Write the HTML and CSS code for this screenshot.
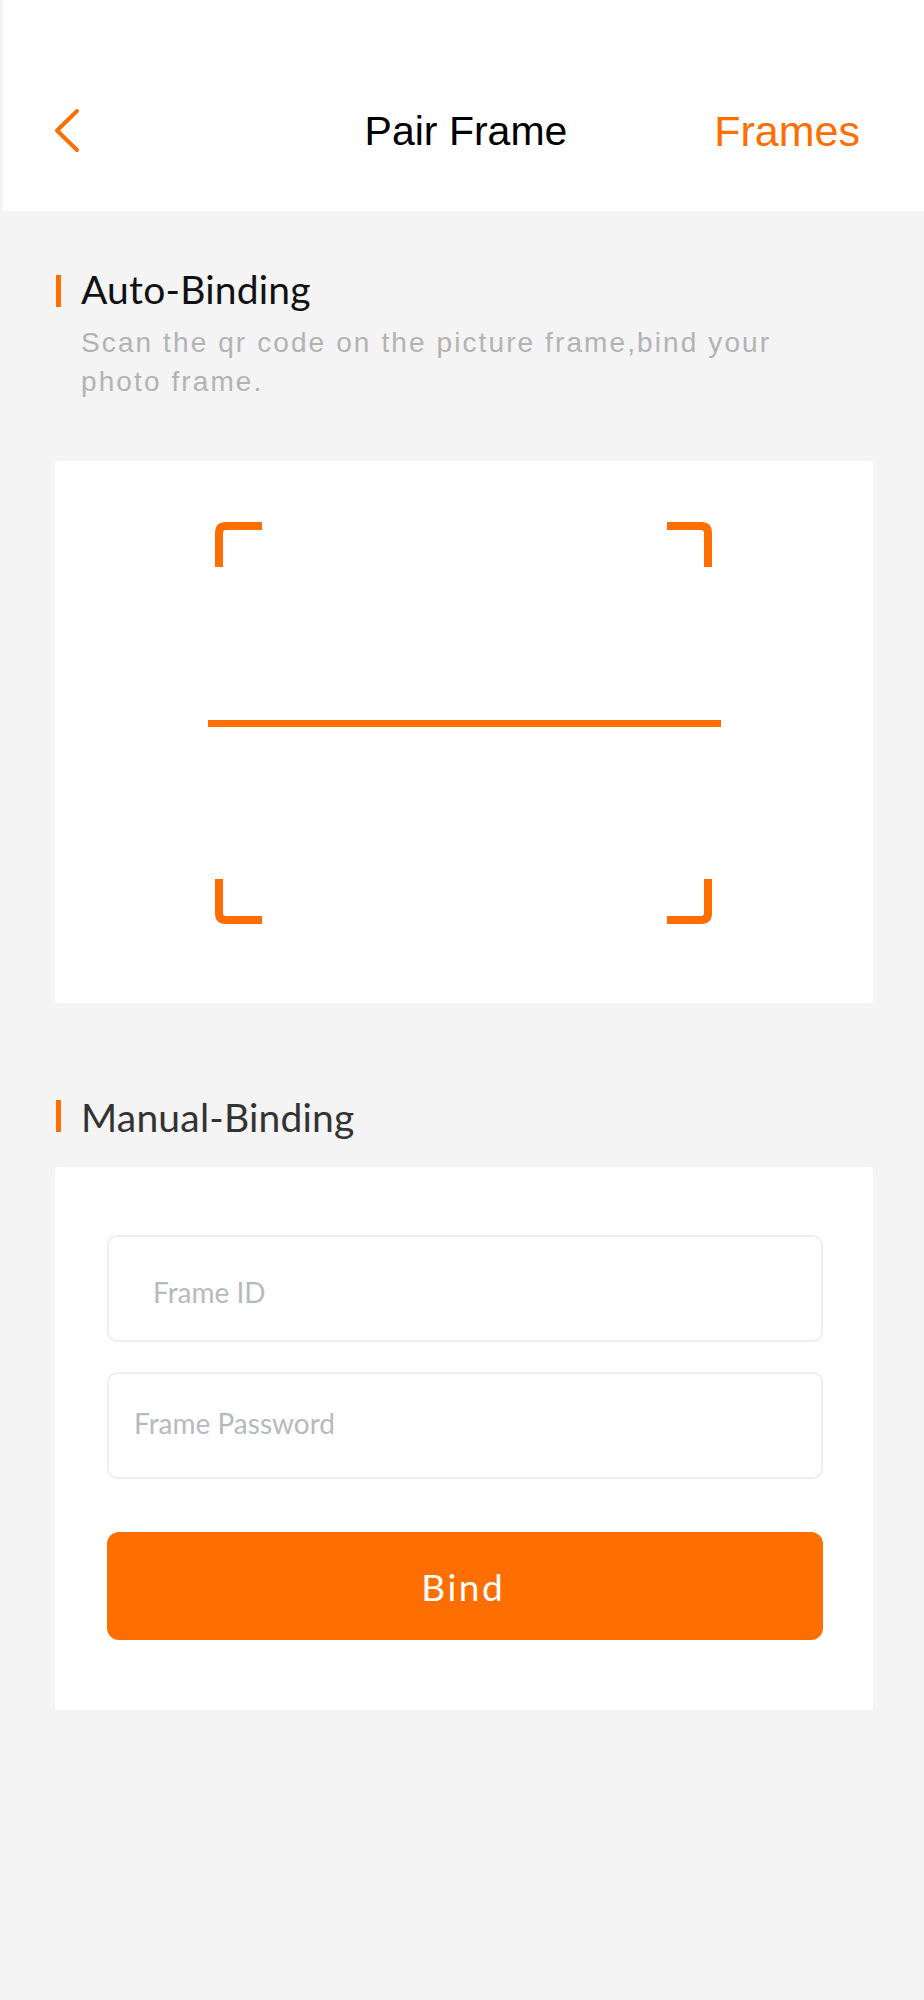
FILE: index.html
```html
<!DOCTYPE html>
<html lang="en">
<head>
<meta charset="utf-8">
<title>Pair Frame</title>
<link rel="stylesheet" href="styles.css">
</head>
<body>
<div class="page">
  <header class="nav">
    <button class="nav-back" type="button" aria-label="Back">
      <svg width="30" height="48" viewBox="0 0 30 48"><path d="M23 4 L3 23.5 L23 43" fill="none" stroke="#ff6e00" stroke-width="4" stroke-linecap="round" stroke-linejoin="round"/></svg>
    </button>
    <h1 class="nav-title">Pair Frame</h1>
    <a class="nav-action" href="#">Frames</a>
  </header>

  <main class="content">
    <section class="section section--auto">
      <h2 class="section-title"><span class="section-bar"></span><span class="section-text section-text--auto">Auto-Binding</span></h2>
      <p class="section-desc">Scan the qr code on the picture frame,bind your<br>photo frame.</p>
      <div class="card scan-card">
        <svg class="scan-frame" width="513" height="402" viewBox="0 0 513 402">
          <g fill="none" stroke="#ff6e00" stroke-width="8">
            <path d="M11 45 V11 Q11 4 18 4 H54"/>
            <path d="M459 4 H493 Q500 4 500 11 V45"/>
            <path d="M11 357 V391 Q11 398 18 398 H54"/>
            <path d="M459 398 H493 Q500 398 500 391 V357"/>
          </g>
          <rect x="0" y="198" width="513" height="7" fill="#ff6e00"/>
        </svg>
      </div>
    </section>

    <section class="section section--manual">
      <h2 class="section-title"><span class="section-bar"></span><span class="section-text section-text--manual">Manual-Binding</span></h2>
      <form class="card bind-card">
        <input class="field field--id" type="text" placeholder="Frame ID">
        <input class="field field--pwd" type="password" placeholder="Frame Password">
        <button class="bind-btn" type="button">Bind</button>
      </form>
    </section>
  </main>
</div>
</body>
</html>
```

FILE: styles.css
```css
* {
  box-sizing: border-box;
}

html, body {
  margin: 0;
  padding: 0;
  background: #f4f4f4;
}

body {
  font-family: "Liberation Sans", Arial, sans-serif;
  min-height: 2000px;
}

.page {
  width: 924px;
  min-height: 2000px;
  background: #f4f4f4;
}

/* Navigation bar */
.nav {
  margin-left: 3px;
  height: 211px;
  background: #ffffff;
  padding: 50px 64px 0 51px;
  display: grid;
  grid-template-columns: 1fr auto 1fr;
  align-items: center;
}

.nav-back {
  justify-self: start;
  border: 0;
  background: none;
  padding: 0;
  display: flex;
}

.nav-title {
  margin: 0 0 0 18px;
  font-family: "Liberation Sans", Arial, sans-serif;
  font-weight: 400;
  font-size: 41px;
  color: #000000;
  line-height: 48px;
}

.nav-action {
  justify-self: end;
  font-family: "Liberation Sans", Arial, sans-serif;
  font-size: 43px;
  color: #ff6e00;
  text-decoration: none;
  line-height: 48px;
}

/* Sections */
.content {
  padding: 0 51px 0 55px;
}

.section--auto {
  padding-top: 64px;
}

.section--manual {
  padding-top: 97px;
}

.section-title {
  margin: 0;
  display: flex;
  align-items: flex-start;
  gap: 20px;
  font-weight: 400;
  padding-left: 1px;
}

.section-bar {
  flex: none;
  width: 5px;
  height: 32px;
  background: #ff6e00;
}

.section-text {
  font-family: Lato, "Open Sans", sans-serif;
  font-size: 39px;
  letter-spacing: 0.2px;
  line-height: 28px;
}

.section-text--auto {
  color: #111111;
}

.section-text--manual {
  color: #333333;
  padding-top: 3px;
}

.section-desc {
  margin: 16px 0 0 26px;
  font-family: "Liberation Sans", Arial, sans-serif;
  font-size: 28px;
  line-height: 39px;
  letter-spacing: 2.1px;
  color: #b3b3b3;
}

.card {
  background: #ffffff;
  border-radius: 4px;
}

.scan-card {
  margin-top: 60px;
  padding: 61px 0 79px 153px;
}

.scan-frame {
  display: block;
}

.bind-card {
  margin: 35px 0 0 0;
  padding: 68px 50px 70px 52px;
  display: flex;
  flex-direction: column;
}

.field {
  display: block;
  width: 100%;
  height: 107px;
  border: 2px solid #eeeeee;
  border-radius: 10px;
  background: #ffffff;
  font-family: Lato, "Open Sans", sans-serif;
  font-size: 28px;
  color: #333333;
  outline: none;
}

.field::placeholder {
  color: #b6babe;
}

.field--id {
  padding: 6px 20px 0 44px;
}

.field--pwd {
  margin-top: 30px;
  padding: 0 20px 6px 25px;
}

.bind-btn {
  margin-top: 53px;
  height: 108px;
  width: 100%;
  border: 0;
  border-radius: 12px;
  background: #ff6e00;
  color: #ffffff;
  font-family: Lato, "Open Sans", sans-serif;
  font-size: 37px;
  letter-spacing: 2.5px;
  padding-left: 2.5px;
}
```
